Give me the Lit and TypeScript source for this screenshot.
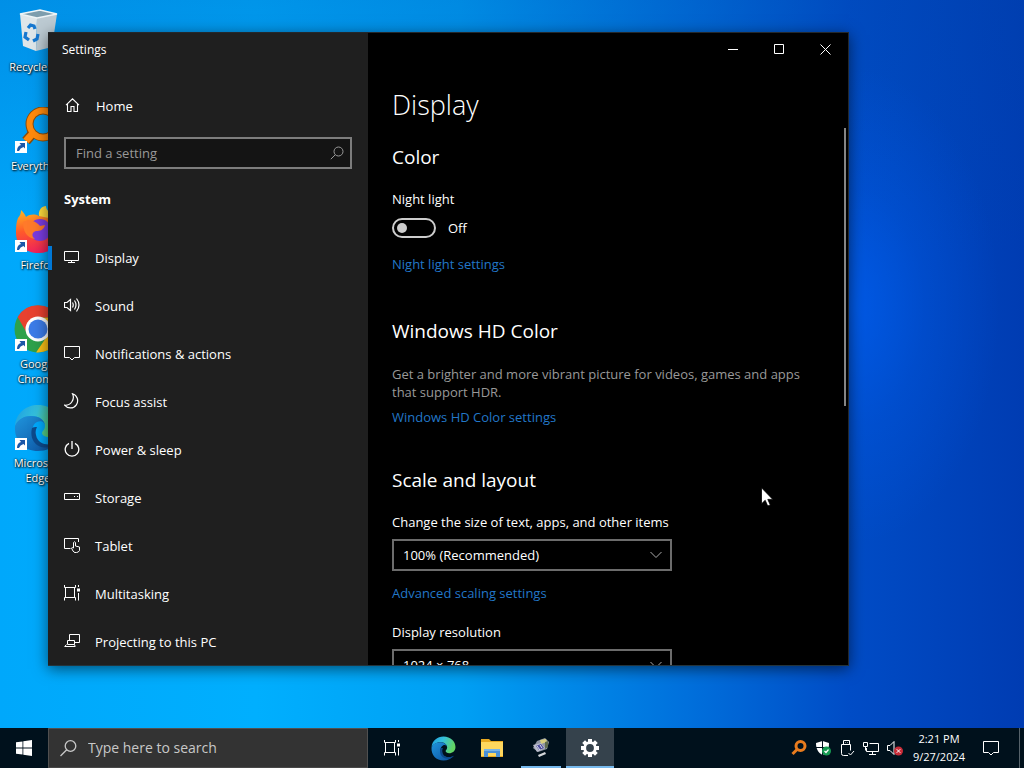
import { LitElement, html, css, svg, nothing } from "lit";
import { customElement, state } from "lit/decorators.js";

const taskView = svg`<path d="M.5 0v2.500h11V0M.5 15.500v-3h11v3M1.500 2.500v10M10.500 2.500v10M14.500 0v2M14.500 8v7.500"/><path d="M13 3.500h3v3h-3z" fill="currentColor" stroke="none"/>`;

const navIcons: Record<string, unknown> = {
  home: svg`<path d="M2 8.2 8.500 1.800 15 8.200M3.500 7v7.500h3.500v-5h3v5h3.500V7" stroke-width="1.100"/>`,
  display: svg`<path d="M.5 2.500h14v9H.5zM7.500 11.500v2M4 13.500h7"/>`,
  sound: svg`<path d="M.5 5.500h2.500l3.500-3v11l-3.500-3H.5zM8.500 5.500q1.500 2.500 0 5M10.500 3.500q3 4.500 0 9M12.500 1.500q5 6.500 0 13" stroke-width="1.200"/>`,
  notifications: svg`<path d="M.5 1.500h15v11h-5l-2.500 2.500-2.500-2.500h-5z"/>`,
  focus: svg`<path d="M8.500.7a8 8 0 0 1-7.900 11.500A7.300 7.300 0 1 0 8.500.7z" stroke-width="1.200"/>`,
  power: svg`<path d="M5 2.300a6.800 6.800 0 1 0 6 0M8 0v8" stroke-width="1.300"/>`,
  storage: svg`<path d="M.5 4.500h15v6H.5zM10 7.500h1M13 7.500h1"/>`,
  tablet: svg`<path d="M6.500 11.500h-6v-10h14V5"/><path d="M9.500 11V5.500q1-1.500 2 0V9l4 1v3.500q-1 2-3 2h-1.500q-1 0-2-1.500l-1.500-3q.8-1 2 0"/>`,
  multitasking: taskView,
  projecting: svg`<path d="M5.500 7V1.500h10v8H11M3.500 7.500h7v4h-7zM2.500 11.500.7 13.500h10.500l-.7-2"/>`,
};

const navItems = [
  ["display", "Display"],
  ["sound", "Sound"],
  ["notifications", "Notifications & actions"],
  ["focus", "Focus assist"],
  ["power", "Power & sleep"],
  ["storage", "Storage"],
  ["tablet", "Tablet"],
  ["multitasking", "Multitasking"],
  ["projecting", "Projecting to this PC"],
];

const edgeLogo = (id: string) => svg`
  <defs>
    <linearGradient id="${id}a" x1="0" y1="0" x2="1" y2=".3"><stop offset="0" stop-color="#1b9de2"/><stop offset=".5" stop-color="#35c1dc"/><stop offset="1" stop-color="#62d563"/></linearGradient>
    <linearGradient id="${id}b" x1="0" y1="0" x2="1" y2="1"><stop offset="0" stop-color="#1f94dc"/><stop offset="1" stop-color="#0c4f9e"/></linearGradient>
  </defs>
  <path d="M1 22C2 9 12 1 24 1c14 0 23 10 23 20 0 8-6 12-12 12-4 0-7-2-7-4s3-3 3-7c0-6-6-10-13-10C9 12 3 17 1 22z" fill="url(#${id}a)"/>
  <path d="M1 22c3-7 9-10 16-10 8 0 14 4 14 10 0-4-4-6-8-4-7 3-8 20 9 23 5 1 9-1 12-4-5 7-12 10-20 10C10 47 0 37 1 22z" fill="url(#${id}b)"/>
  <path d="M18 24c-3 12 5 22 19 19 3-1 6-3 7-5-7 4-20 4-22-7-1-3 0-6 1-8-2 0-4 0-5 1z" fill="#0d4a8c"/>`;

const desktopItems = [
  {
    label: "Recycle Bin",
    shortcut: false,
    art: svg`<path d="m6 6 17 4-1 33-13-5z" fill="#dfe6e9"/><path d="m23 10 20-4-5 33-16 4z" fill="#bccad2"/><path d="M6 6 26 2l17 4-20 4z" fill="#7d9dad" stroke="#eef4f6" stroke-width="1.500"/><path d="m14 20 2.500-3 3.500 1 1 3M12 24l-1 5 4 3M19 33l4-2 1-5" fill="none" stroke="#1677cf" stroke-width="3.200"/>`,
  },
  {
    label: "Everything",
    shortcut: true,
    art: svg`<path d="m12 34 8-9" stroke="#8a4b08" stroke-width="10"/><circle cx="29" cy="17" r="13.500" fill="none" stroke="#8a4b08" stroke-width="8"/><path d="m12 34 8-9" stroke="#ff8a0c" stroke-width="7"/><circle cx="29" cy="17" r="13.500" fill="none" stroke="#ff8a0c" stroke-width="6"/>`,
  },
  {
    label: "Firefox",
    shortcut: true,
    art: svg`<defs><linearGradient id="fx" x1=".3" y1="0" x2=".5" y2="1"><stop offset="0" stop-color="#ffb020"/><stop offset=".45" stop-color="#ff5a2a"/><stop offset="1" stop-color="#f0205e"/></linearGradient></defs><path d="M25 10C24 4 28 0 32 0c0 5 6 8 10 13l-8 8z" fill="#ffdb3c"/><path d="M4 12c2-2 3-5 3-8 2 2 4 4 5 7 4-3 9-3 13-1l10 2c8 4 12 10 11 18-1 9-9 17-21 17C11 47 2 39 2 27c0-6 0-10 2-15z" fill="url(#fx)"/><circle cx="26" cy="24" r="11" fill="#7a3be0"/><path d="M9 16c7-4 13 0 17 4l5-1c-1 5-5 6-9 6-4 1-5 5-1 8-9-1-12-9-12-17z" fill="#ff7a2a"/>`,
  },
  {
    label: "Google Chrome",
    shortcut: true,
    art: svg`<circle cx="24" cy="24" r="23.500" fill="#2da14b"/><path d="M3.600 12A23.500 23.500 0 0 1 44.400 12L24 13 14 30z" fill="#e8412f"/><path d="M44.400 12.300A23.500 23.500 0 0 1 22 47.400L34 30 24 13z" fill="#fbc116"/><circle cx="24" cy="24" r="12.500" fill="#fff"/><circle cx="24" cy="24" r="9.500" fill="#3c7ce8"/>`,
  },
  { label: "Microsoft Edge", shortcut: true, art: edgeLogo("ed") },
];

const trayIcons = [
  { name: "Everything", art: svg`<circle cx="9.500" cy="6" r="4.500" fill="none" stroke="#e87c1e" stroke-width="3"/><path d="m6.500 9-5 5" stroke="#e87c1e" stroke-width="3"/>` },
  { name: "Windows Security", art: svg`<path d="M7.500 1 1 3c0 6 2 9.500 6.500 12C12.500 12.500 14 9 14 3z" fill="#fff"/><path d="M7.500 1v14M1 7.500h13" stroke="#00101c"/><circle cx="11.500" cy="11" r="4.500" fill="#169b53"/><path d="m9.500 11 1.500 1.500 2.500-3" fill="none" stroke="#fff" stroke-width="1.200"/>` },
  { name: "Safely Remove Hardware", art: svg`<path d="M4.500.5h6v4h-6zM9 15.500H4.500q-2 0-2-2v-9h9v6M6.500 2.500h.5M8.500 2.500h.5M9.500 13l2 2 3.500-4" fill="none" stroke="#fff"/>` },
  { name: "Network", art: svg`<path d="M6.500 3.500h9v8h-12V8M9.500 11.500v3M6 14.500h7M.5 2.500h4v4h-4zM2.500 6.500v4" fill="none" stroke="#fff"/>` },
  { name: "Volume muted", art: svg`<path d="M.5 5.500H3l4-4v13l-4-4H.5z" fill="none" stroke="#fff"/><circle cx="11.500" cy="11" r="4.500" fill="#c92c38"/><path d="m9.700 9.200 3.600 3.600m0-3.600-3.600 3.600" stroke="#fff"/>` },
];

@customElement("app-root")
export class AppRoot extends LitElement {
  @state() private nightLight = false;

  static styles = css`
    :host {
      display: block;
      height: 100vh;
      font: 13px/20px "Open Sans", "Noto Sans", sans-serif;
      color: #fff;
    }
    * { box-sizing: border-box; }
    button, input, select { font: inherit; color: inherit; border: 0; background: none; padding: 0; margin: 0; }
    a { text-decoration: none; color: inherit; }
    svg { display: block; flex: none; }
    .screen { display: flex; flex-direction: column; height: 100%; overflow: hidden; position: relative; }
    .desktop {
      flex: 1; min-height: 0; position: relative; padding-top: 8px;
      background:
        radial-gradient(ellipse 150px 240px at 83% 42%, rgba(0, 100, 255, .55), rgba(0, 100, 255, .2) 50%, transparent),
        linear-gradient(180deg, rgba(0, 70, 170, .25), transparent 35%),
        linear-gradient(90deg, #00a8fb 0%, #00affe 25%, #00a0f4 45%, #0070dc 67%, #004cc6 83%, #003cb2 100%);
    }
    .shortcuts { display: grid; grid-auto-rows: 99px; width: 76px; margin: 0; padding: 0; list-style: none; }
    .shortcut { display: flex; flex-direction: column; align-items: center; padding: 0 6px; font-size: 11px; line-height: 15px; text-align: center; text-shadow: 1px 1px 2px #000, 0 0 2px #000; }
    .shortcut svg { margin-bottom: 3px; }
    .window {
      position: absolute; inset: 32px 175px 62px 48px; display: grid; grid-template-columns: 320px 1fr;
      border-top: 1px solid #24282c; border-right: 1px solid #24282c; border-bottom: 1px solid #24343c;
      background: #000; box-shadow: 0 3px 14px rgba(0, 0, 0, .55); overflow: hidden;
    }
    .sidebar { background: #1f1f1f; overflow: hidden; }
    .title { height: 33px; padding-left: 14px; font-size: 12px; line-height: 34px; }
    .icon { fill: none; stroke: currentColor; }
    .row { display: flex; align-items: center; height: 48px; padding: 0 16px; gap: 15px; position: relative; }
    .home { margin: 16px 0 7px; gap: 16px; }
    .current::before { content: ""; position: absolute; left: 0; top: 12px; width: 4px; height: 24px; background: #0078d7; }
    .find { display: flex; align-items: center; height: 32px; margin: 0 16px; border: 2px solid #7d7d7d; background: #141414; padding: 0 6px 0 10px; color: #999; }
    .find input { flex: 1; min-width: 0; outline: 0; }
    .find input::placeholder, .search input::placeholder { color: inherit; opacity: 1; }
    .group { margin: 20px 16px 25px; font-size: 13px; line-height: 20px; font-weight: 700; }
    .main { position: relative; overflow: hidden; }
    .caption { display: flex; justify-content: flex-end; height: 32px; }
    .caption button { width: 46px; display: grid; place-items: center; }
    .content { padding: 24px 24px 0; }
    h1 { margin: 0 0 22px; font-size: 27px; line-height: 32px; font-weight: 300; }
    h2 { margin: 0 0 18px; font-size: 19px; line-height: 28px; font-weight: 400; }
    section { margin-bottom: 39px; }
    section:first-of-type { margin-bottom: 43px; }
    label, .link { display: block; width: fit-content; }
    .link { color: #2277c8; }
    .toggle { display: flex; align-items: center; gap: 12px; margin: 9px 0 16px; }
    .toggle input { appearance: none; width: 44px; height: 20px; border: 2px solid #ccc; border-radius: 10px; display: flex; align-items: center; padding: 0 3px; }
    .toggle input::before { content: ""; width: 10px; height: 10px; border-radius: 5px; background: #ccc; }
    .toggle input:checked { background: #0078d7; justify-content: flex-end; }
    p { margin: 20px 0 6px; line-height: 18px; color: #999; }
    .pick { display: grid; align-items: center; width: 280px; max-width: 100%; margin: 7px 0 12px; }
    .pick > * { grid-area: 1 / 1; }
    .pick select { appearance: none; height: 32px; width: 100%; border: 2px solid #6c6c6c; padding: 0 32px 0 9px; background: #000; }
    .pick svg { justify-self: end; margin-right: 10px; pointer-events: none; }
    .gap { margin-bottom: 19px; }
    .thumb { position: absolute; right: 2px; top: 95px; width: 2px; height: 44%; background: #858585; }
    .pointer { position: absolute; left: 761px; top: 487px; }
    .taskbar { display: flex; height: 40px; background: #00111c; flex: none; }
    .taskbar button { display: grid; place-items: center; width: 48px; height: 40px; }
    .search { display: flex; align-items: center; gap: 11px; width: 320px; padding: 0 11px; background: #333; border: 1px solid #505050; border-bottom-color: #484848; color: #c8c8c8; font-size: 14px; }
    .search input { flex: 1; min-width: 0; outline: 0; }
    .apps { display: flex; gap: 1px; padding-left: 3px; }
    .apps .running { background: linear-gradient(#76b9ed, #76b9ed) 50% 100% / 40px 2px no-repeat; }
    .apps .active { background: linear-gradient(#76b9ed, #76b9ed) 50% 100% / 48px 2px no-repeat #35424c; }
    .tray { display: flex; margin-left: auto; }
    .taskbar .small { width: 24px; }
    .taskbar .clock { width: 64px; font-size: 11px; line-height: 18px; text-align: center; align-content: center; }
    .taskbar .notes { width: 40px; margin-right: 8px; }
    .taskbar .peek { width: 5px; border-left: 1px solid #56626a; }
  `;

  private icon(name: string) {
    return html`<svg class="icon" width="16" height="18" viewBox="0 0 16 18" aria-hidden="true">${navIcons[name]}</svg>`;
  }

  private sidebar() {
    return html`<aside class="sidebar">
      <div class="title">Settings</div>
      <a class="row home" href="#home">${this.icon("home")}Home</a>
      <div class="find">
        <input type="text" placeholder="Find a setting" aria-label="Find a setting" />
        <svg class="icon" width="14" height="14" viewBox="0 0 14 14"><circle cx="8.500" cy="5.500" r="4.500" /><path d="M5.200 8.800.8 13.200" /></svg>
      </div>
      <h3 class="group">System</h3>
      <nav>
        ${navItems.map(
          ([id, text], i) => html`<a class="row ${i === 0 ? "current" : ""}" href="#${id}">${this.icon(id)}<span>${text}</span></a>`
        )}
      </nav>
    </aside>`;
  }

  private picker(id: string, value: string) {
    return html`<div class="pick">
      <select id=${id}><option>${value}</option></select>
      <svg class="icon" width="12" height="8" viewBox="0 0 12 8"><path d="m.5 1 5.500 5.500L11.500 1" stroke="#aaa" /></svg>
    </div>`;
  }

  private content() {
    return html`<main class="main">
      <div class="caption">
        <button aria-label="Minimize"><svg class="icon" width="10" height="10"><path d="M0 5.500h10" /></svg></button>
        <button aria-label="Maximize"><svg class="icon" width="10" height="10"><path d="M.5.5h9v9h-9z" /></svg></button>
        <button aria-label="Close"><svg class="icon" width="11" height="11"><path d="m.5.5 10 10m0-10-10 10" /></svg></button>
      </div>
      <div class="content">
        <h1>Display</h1>
        <section>
          <h2>Color</h2>
          <label for="night">Night light</label>
          <div class="toggle">
            <input id="night" type="checkbox" role="switch" .checked=${this.nightLight}
              @change=${(e: Event) => (this.nightLight = (e.target as HTMLInputElement).checked)} />
            <span>${this.nightLight ? "On" : "Off"}</span>
          </div>
          <a class="link" href="#night-light">Night light settings</a>
        </section>
        <section>
          <h2>Windows HD Color</h2>
          <p>Get a brighter and more vibrant picture for videos, games and apps that support HDR.</p>
          <a class="link" href="#hd-color">Windows HD Color settings</a>
        </section>
        <section>
          <h2>Scale and layout</h2>
          <label for="scale">Change the size of text, apps, and other items</label>
          ${this.picker("scale", "100% (Recommended)")}
          <a class="link gap" href="#scaling">Advanced scaling settings</a>
          <label for="resolution">Display resolution</label>
          ${this.picker("resolution", "1024 × 768")}
        </section>
      </div>
      <div class="thumb"></div>
    </main>`;
  }

  private taskbar() {
    return html`<footer class="taskbar">
      <button aria-label="Start"><svg width="16" height="16" viewBox="0 0 16 16" fill="#fff"><path d="M0 2.300 6.500 1.400v6.200H0zM7.300 1.300 16 0v7.600H7.300zM0 8.400h6.500v6.200L0 13.700zM7.300 8.400H16V16l-8.700-1.300z" /></svg></button>
      <div class="search">
        <svg class="icon" width="17" height="17" viewBox="0 0 17 17" stroke-width="1.300"><circle cx="10.500" cy="6" r="5.300" /><path d="M6.700 9.800.5 16" /></svg>
        <input type="text" placeholder="Type here to search" aria-label="Type here to search" />
      </div>
      <button aria-label="Task View"><svg class="icon" width="16" height="16">${taskView}</svg></button>
      <div class="apps">
        <button aria-label="Microsoft Edge"><svg width="25" height="25" viewBox="0 0 48 48">${edgeLogo("te")}</svg></button>
        <button aria-label="File Explorer"><svg width="22" height="20" viewBox="0 0 22 20"><path d="M0 1h8l2 2h12v16H0z" fill="#e9a920" /><path d="M0 4h22v14H0z" fill="#ffd75e" /><path d="M3 19v-8h16v8h-4v-4H7v4z" fill="#4a90d6" /><path d="M3 11h16v2H3z" fill="#79b4e6" /></svg></button>
        <button class="running" aria-label="Setup"><svg width="18" height="20" viewBox="0 0 18 20"><path d="m5 3 8-3 4 4-2 7-9 3-5-4z" fill="#8f96a4" /><path d="m8 2 6-1 1 3-6 2z" fill="#d9cf80" /><path d="m1 7 8-2 4 5-8 4z" fill="#b9bccb" /><path d="m4 8 5-2 3 4-5 2z" fill="#4a4a9c" /><path d="m5 8 3 4M8 7l2 3" stroke="#dfe2ee" /><path d="m6 17 7-3 1 2-7 3z" fill="#d5d8da" /><path d="m13 4 3-1v6l-3 2z" fill="#5d6b4e" /></svg></button>
        <button class="active" aria-label="Settings"><svg width="20" height="20" viewBox="-10 -10 20 20"><g fill="#fff">${[0, 45, 90, 135].map((a) => svg`<path d="M-2-9h4V9h-4z" transform="rotate(${a})"/>`)}</g><circle r="5.300" fill="#35424c" stroke="#fff" stroke-width="2.800" /></svg></button>
      </div>
      <div class="tray">
        ${trayIcons.map((t) => html`<button class="small" aria-label=${t.name}><svg width="16" height="16" viewBox="0 0 16 16">${t.art}</svg></button>`)}
        <button class="clock"><span>2:21 PM</span><span>9/27/2024</span></button>
        <button class="notes" aria-label="Notifications"><svg class="icon" width="16" height="16"><path d="M.5 1.500h15v11h-5l-2.500 2.500-2.500-2.500h-5z" /></svg></button>
        <button class="peek" aria-label="Show desktop"></button>
      </div>
    </footer>`;
  }

  render() {
    return html`<div class="screen">
      <div class="desktop">
        <ul class="shortcuts">
          ${desktopItems.map(
            (d) => html`<li class="shortcut">
              <svg width="48" height="48" viewBox="0 0 48 48" aria-hidden="true">
                ${d.art}
                ${d.shortcut ? svg`<path d="M1 34h12v12H1z" fill="#fff"/><path d="M3 44q0-5 4-6l-1.500-2H11v5.500L9.500 40Q6 41 5 44z" fill="#1c57a8"/>` : nothing}
              </svg>
              <span>${d.label}</span>
            </li>`
          )}
        </ul>
        <div class="window">${this.sidebar()}${this.content()}</div>
      </div>
      ${this.taskbar()}
      <svg class="pointer" width="12" height="20" viewBox="0 0 12 20"><path d="M.5.8v16l3.700-3.500 2.500 5.700 2.600-1.100-2.500-5.500h5z" fill="#fff" stroke="#000" stroke-width=".8" /></svg>
    </div>`;
  }
}
